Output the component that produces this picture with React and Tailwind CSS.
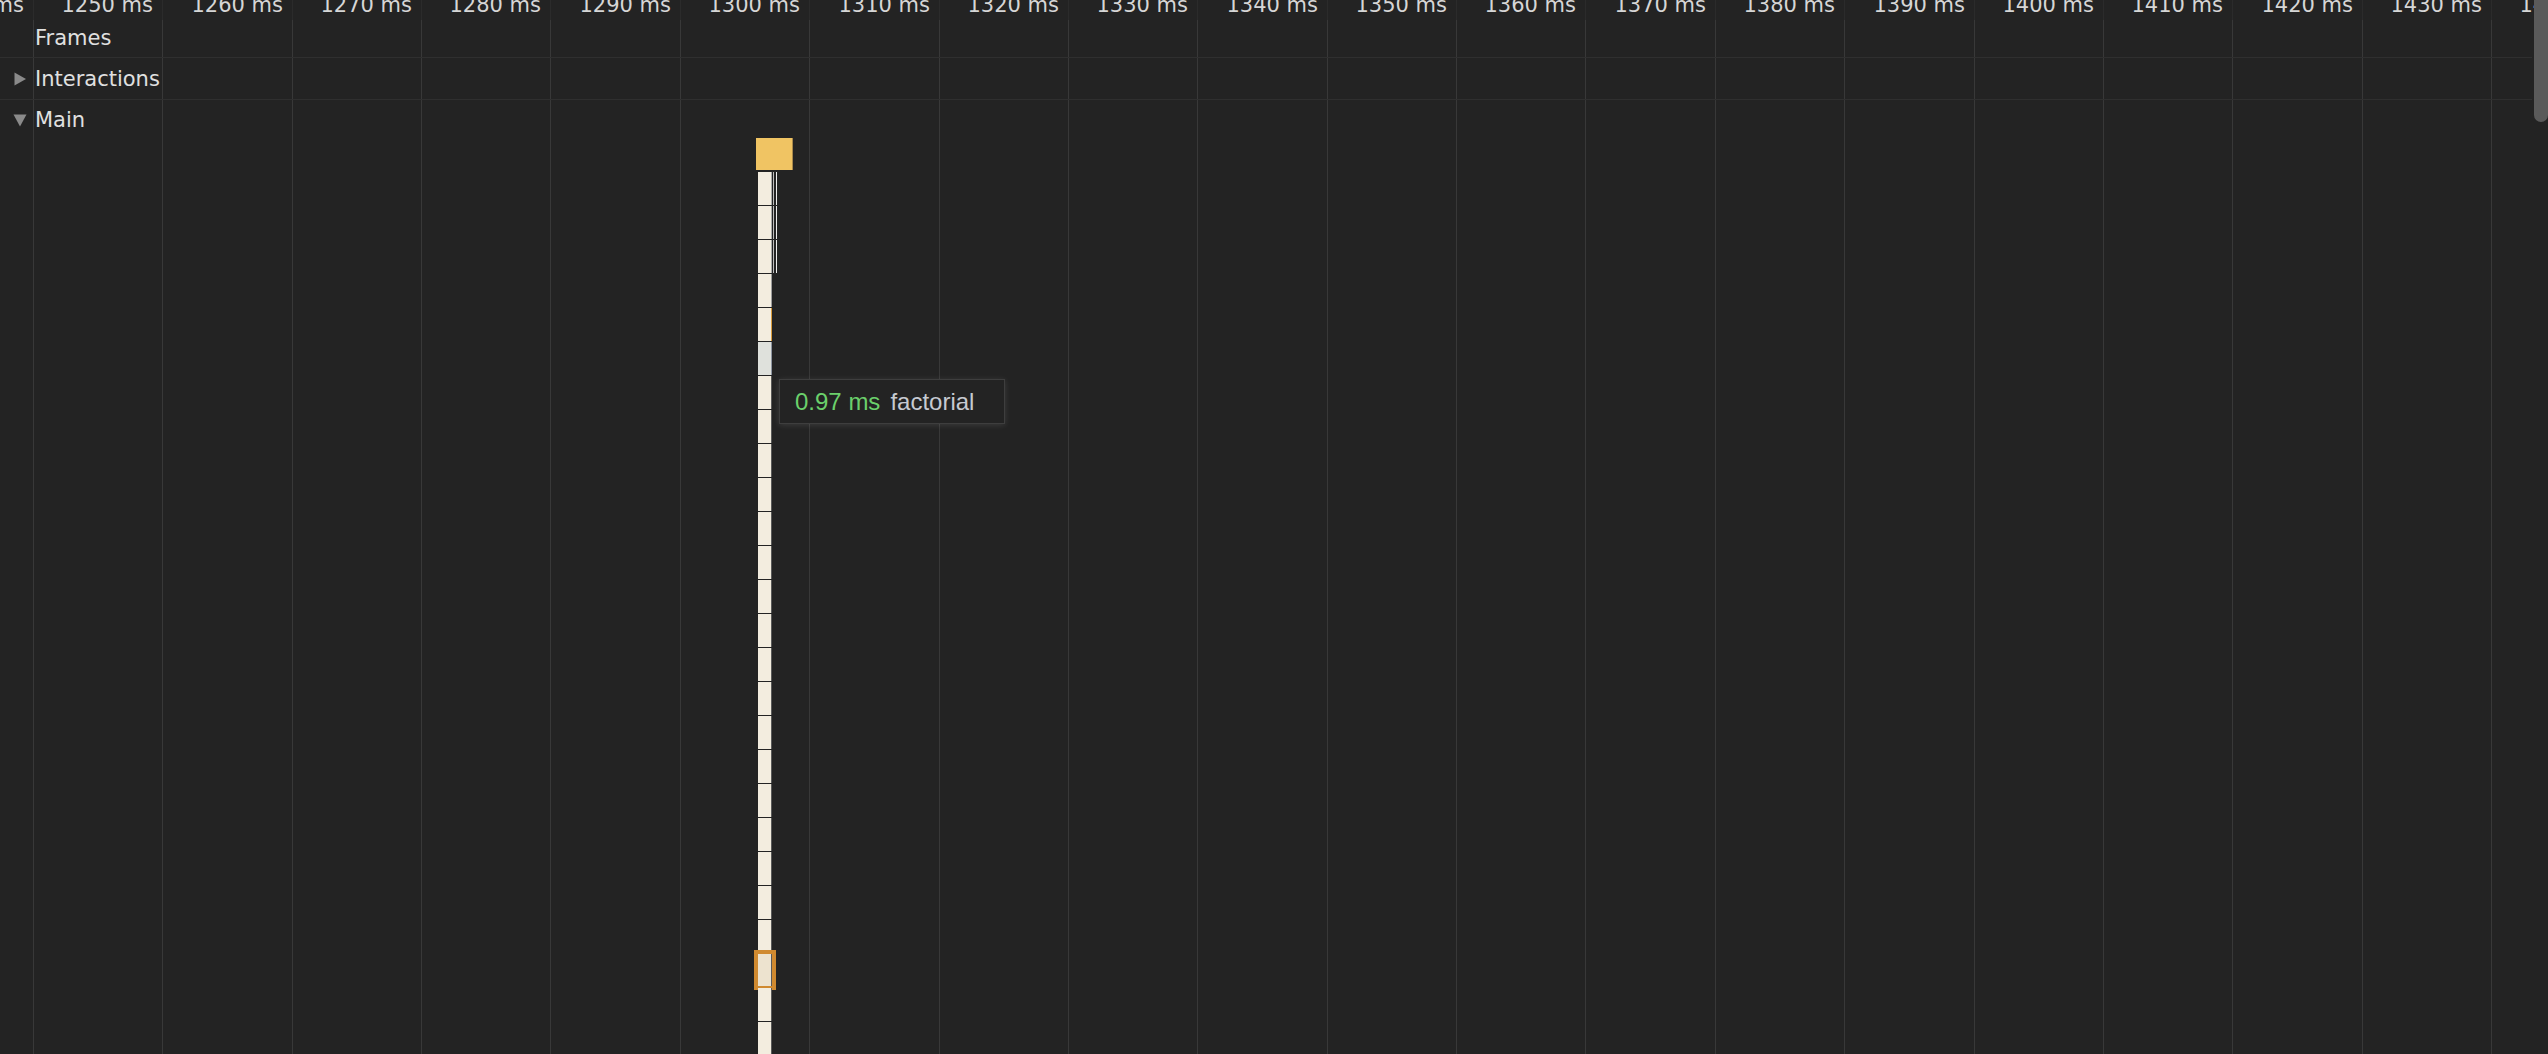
import React from "react";

// time ruler: one tick every 10 ms, 129.37px apart
const TICK_X0 = 33;
const TICK_STEP = 129.37;
const ticks = Array.from({ length: 21 }, (_, i) => ({
  x: TICK_X0 + TICK_STEP * i,
  label: `${1240 + i * 10} ms`,
}));

// the call stack under the yellow task, top to bottom
const stack = Array.from({ length: 26 }, (_, i) => {
  if (i < 3) return { color: "cream", edge: "bg-[#a9a9a9]", kids: true };
  if (i === 3) return { color: "cream", edge: "bg-[#9d9d9d]" };
  if (i === 4) return { color: "cream", edge: "bg-[#d99c3c]" };
  if (i === 5) return { color: "gray", edge: "bg-[#8d94a0]" };
  if (i === 23) return { color: "cream", edge: "bg-[#5a5a5a]", selected: true };
  return { color: "cream", edge: "bg-[#5a5a5a]" };
});

const Arrow = ({ open }) => (
  <svg width="14" height="14" viewBox="0 0 14 14" className="shrink-0">
    {open ? (
      <path d="M0.5 1.5 L13.5 1.5 L7 13.5 Z" fill="#8a8a8a" />
    ) : (
      <path d="M1.5 0.5 L13 7 L1.5 13.5 Z" fill="#8a8a8a" />
    )}
  </svg>
);

const Track = ({ label, arrow, className }) => (
  <div className={`flex items-center gap-[8px] pl-[13px] leading-[24px] text-[21px] text-[#e0e0e0] ${className}`}>
    {arrow ? <Arrow open={arrow === "open"} /> : <span className="w-[14px] shrink-0" />}
    <span>{label}</span>
  </div>
);

const StackRow = ({ row }) => (
  <div className="relative flex h-[33px] ml-[2px]">
    <div className={`w-[13px] h-full ${row.selected ? "bg-[#ede3cf]" : row.color === "gray" ? "bg-[#dfe1dc]" : "bg-[#f3eddf]"}`} />
    <div className={`w-px h-full ${row.edge}`} />
    {row.kids && (
      <>
        <div className="w-px h-full ml-px bg-[#bdbdbd]" />
        <div className="w-px h-full ml-[2px] bg-[#eeeeee]" />
      </>
    )}
    {row.selected && (
      <div className="absolute left-[-4px] top-[-4px] w-[22px] h-[40px] border-4 border-[#d08a30]" />
    )}
  </div>
);

export default function App() {
  return (
    <div className="relative w-[2548px] h-[1054px] overflow-hidden bg-[#232323] font-['DejaVu_Sans',sans-serif]">
      {/* grid lines */}
      <div className="absolute inset-0 pointer-events-none">
        {ticks.map((t) => (
          <div key={t.x} className="absolute top-0 h-full w-px flex flex-col" style={{ left: Math.round(t.x) }}>
            <div className="h-[20px] bg-[#2b2b2b]" />
            <div className="flex-1 bg-[#383838]" />
          </div>
        ))}
      </div>

      {/* ruler */}
      <div className="relative h-[20px]">
        {ticks.map((t) => (
          <span
            key={t.label}
            className="absolute top-[-7px] -translate-x-full whitespace-nowrap text-[21px] leading-[24px] text-[#d6d6d6]"
            style={{ left: Math.round(t.x) - 9 }}
          >
            {t.label}
          </span>
        ))}
      </div>

      {/* tracks */}
      <div className="relative w-[2532px]">
        <Track label="Frames" className="h-[38px] pb-[2px] border-b border-[#2f2f2f]" />
        <Track label="Interactions" arrow="closed" className="h-[42px] pt-[1px] border-b border-[#2f2f2f]" />
        <Track label="Main" arrow="open" className="h-[40px]" />
      </div>

      {/* flame chart column */}
      <div className="absolute left-[756px] top-[138px] flex flex-col gap-px">
        <div className="flex h-[33px]">
          <div className="w-[36px] h-[32px] bg-[#f0c463]" />
          <div className="w-px h-[32px] bg-[#a8884a]" />
        </div>
        {stack.map((row, i) => (
          <StackRow key={i} row={row} />
        ))}
      </div>

      {/* tooltip */}
      <div className="absolute left-[779px] top-[379px] w-[226px] h-[45px] flex items-center gap-[10px] pl-[15px] border border-[#3e3e3e] bg-[#232323] shadow-[0_1px_6px_rgba(255,255,255,0.12)] font-['Liberation_Sans',Arial,sans-serif] text-[24px]">
        <span className="text-[#6bd06b]">0.97 ms</span>
        <span className="text-[#c6cad1]">factorial</span>
      </div>

      {/* scrollbar */}
      <div className="absolute right-0 top-[-10px] w-[14px] h-[132px] rounded-full bg-[#5a5a5a]" />
    </div>
  );
}
